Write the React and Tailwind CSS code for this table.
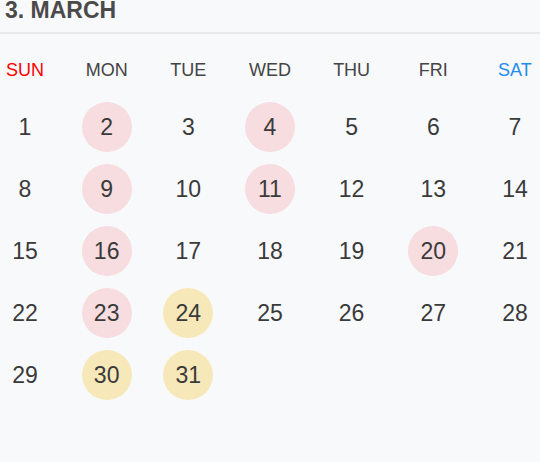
import React from "react";

const days = [
  { n: "SUN", c: "text-[#f00]" },
  { n: "MON", c: "text-[#444]" },
  { n: "TUE", c: "text-[#444]" },
  { n: "WED", c: "text-[#444]" },
  { n: "THU", c: "text-[#444]" },
  { n: "FRI", c: "text-[#444]" },
  { n: "SAT", c: "text-[#1e8cf0]" },
];

const pink = [2, 4, 9, 11, 16, 20, 23];
const yellow = [24, 30, 31];

function Cell({ d }) {
  if (!d) return <div className="w-[50px] h-[50px]" />;
  let bg = "";
  if (pink.includes(d)) bg = "bg-[#f7dce0]";
  else if (yellow.includes(d)) bg = "bg-[#f7e8b9]";
  return (
    <div
      className={`w-[50px] h-[50px] rounded-full flex items-center justify-center pt-[1px] text-[23px] leading-[23px] text-[#3a3a3a] ${bg}`}
    >
      {d}
    </div>
  );
}

export default function App() {
  const weeks = [];
  for (let w = 0; w < 5; w++) {
    const row = [];
    for (let i = 0; i < 7; i++) {
      const d = w * 7 + i + 1;
      row.push(d <= 31 ? d : null);
    }
    weeks.push(row);
  }
  return (
    <div
      className="w-[540px] h-[462px] bg-[#f8f9fb] overflow-hidden"
      style={{ fontFamily: '"Liberation Sans", Arial, sans-serif' }}
    >
      <div className="h-[34px] border-b-2 border-[#e8e9eb] px-[5px]">
        <div className="text-[23px] leading-[20px] font-bold text-[#4a4a4a]">3. MARCH</div>
      </div>
      <div className="flex justify-between mt-[27px]">
        {days.map((d) => (
          <div key={d.n} className={`w-[50px] text-center text-[18px] leading-[18px] ${d.c}`}>
            {d.n}
          </div>
        ))}
      </div>
      <div className="flex flex-col gap-[12px] mt-[23px]">
        {weeks.map((row, i) => (
          <div key={i} className="flex justify-between">
            {row.map((d, j) => (
              <Cell key={j} d={d} />
            ))}
          </div>
        ))}
      </div>
    </div>
  );
}
